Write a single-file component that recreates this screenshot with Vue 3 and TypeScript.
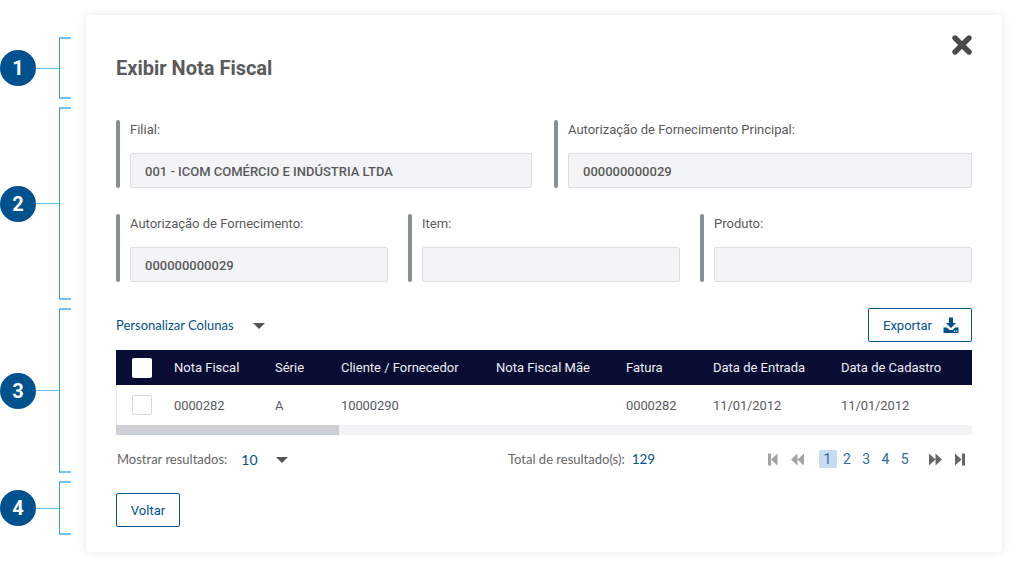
<script setup lang="ts">
type Field = { label: string; value: string }
type Marker = { id: number; size: string }

const markers: Marker[] = [
  { id: 1, size: 'm1' },
  { id: 2, size: 'm2' },
  { id: 3, size: 'm3' },
  { id: 4, size: 'm4' },
]

const topFields: Field[] = [
  { label: 'Filial:', value: '001 - ICOM COMÉRCIO E INDÚSTRIA LTDA' },
  { label: 'Autorização de Fornecimento Principal:', value: '000000000029' },
]

const bottomFields: Field[] = [
  { label: 'Autorização de Fornecimento:', value: '000000000029' },
  { label: 'Item:', value: '' },
  { label: 'Produto:', value: '' },
]

const columns = ['Nota Fiscal', 'Série', 'Cliente / Fornecedor', 'Nota Fiscal Mãe', 'Fatura', 'Data de Entrada', 'Data de Cadastro']
const row = ['0000282', 'A', '10000290', '', '0000282', '11/01/2012', '11/01/2012']
const pages = [1, 2, 3, 4, 5]
</script>

<template>
  <div class="page">
    <aside class="rail">
      <div v-for="m in markers" :key="m.id" class="marker" :class="m.size">
        <span class="marker__num">{{ m.id }}</span>
        <span class="marker__line"></span>
        <span class="marker__bracket"></span>
      </div>
    </aside>

    <main class="card">
      <button class="close" type="button" aria-label="Fechar">
        <svg width="22" height="22" viewBox="0 0 22 22">
          <path d="M4 4 L18 18 M18 4 L4 18" stroke="#4a4a4a" stroke-width="5.4" stroke-linecap="round" />
        </svg>
      </button>
      <h1 class="title">Exibir Nota Fiscal</h1>

      <div class="fields fields--two">
        <div v-for="f in topFields" :key="f.label" class="field">
          <span class="field__label">{{ f.label }}</span>
          <div class="field__input">{{ f.value }}</div>
        </div>
      </div>
      <div class="fields fields--three">
        <div v-for="f in bottomFields" :key="f.label" class="field">
          <span class="field__label">{{ f.label }}</span>
          <div class="field__input">{{ f.value }}</div>
        </div>
      </div>

      <div class="toolbar">
        <div class="custom">
          <span class="custom__text">Personalizar Colunas</span>
          <span class="caret"></span>
        </div>
        <button class="btn btn--export" type="button">
          Exportar
          <svg width="16" height="16" viewBox="0 0 16 16" fill="#00528f">
            <path d="M6 0.5 H10 V6 H13 L8 11 L3 6 H6 Z" />
            <path d="M0.5 10.5 H3.8 L6.6 13 H9.4 L12.2 10.5 H15.5 V16 H0.5 Z" />
            <rect x="11" y="13.6" width="1.2" height="1.2" fill="#fff" />
            <rect x="13" y="13.6" width="1.2" height="1.2" fill="#fff" />
          </svg>
        </button>
      </div>

      <div class="table">
        <div class="table__row table__row--head">
          <span class="check check--head"></span>
          <span v-for="c in columns" :key="c">{{ c }}</span>
        </div>
        <div class="table__row table__row--body">
          <span class="check"></span>
          <span v-for="(c, i) in row" :key="i">{{ c }}</span>
        </div>
        <div class="scroll"><div class="scroll__thumb"></div></div>
      </div>

      <div class="footer">
        <div class="footer__size">
          <span class="muted">Mostrar resultados:</span>
          <span class="link size">10</span>
          <span class="caret"></span>
        </div>
        <div class="footer__total">
          <span class="muted">Total de resultado(s):</span>
          <span class="link total">129</span>
        </div>
        <nav class="pager">
          <svg class="pager__first" width="10" height="13" viewBox="0 0 10 13" fill="#a3a3a3">
            <path d="M0 0.5 H3 V12.5 H0 Z M9.5 0.5 V12.5 L3 6.5 Z" />
          </svg>
          <svg class="pager__prev" width="13" height="13" viewBox="0 0 13 13" fill="#a3a3a3">
            <path d="M6.5 0.5 V12.5 L0 6.5 Z M13 0.5 V12.5 L6.5 6.5 Z" />
          </svg>
          <span v-for="p in pages" :key="p" class="pager__num" :class="{ 'pager__num--on': p === 1 }">{{ p }}</span>
          <svg class="pager__next" width="13" height="13" viewBox="0 0 13 13" fill="#666">
            <path d="M0 0.5 L6.5 6.5 L0 12.5 Z M6.5 0.5 L13 6.5 L6.5 12.5 Z" />
          </svg>
          <svg class="pager__last" width="10" height="13" viewBox="0 0 10 13" fill="#666">
            <path d="M0 0.5 L6.5 6.5 L0 12.5 Z M7 0.5 H10 V12.5 H7 Z" />
          </svg>
        </nav>
      </div>

      <button class="btn btn--back" type="button">Voltar</button>
    </main>
  </div>
</template>

<style>
html, body {
  margin: 0;
  background: #fff;
}
</style>

<style scoped>
.page {
  width: 1017px;
  height: 567px;
  display: flex;
  overflow: hidden;
  font-family: Roboto, sans-serif;
  box-sizing: border-box;
}

/* numbered brackets on the left */
.rail {
  width: 86px;
  flex: none;
  padding-top: 38px;
  display: flex;
  flex-direction: column;
  gap: 10px;
  box-sizing: border-box;
}
.marker {
  position: relative;
  display: flex;
  align-items: center;
}
.m1 { height: 60px; }
.m2 { height: 191px; }
.m3 { height: 163px; }
.m4 { height: 52px; }
.marker__num {
  width: 36px;
  height: 36px;
  border-radius: 50%;
  background: #00528f;
  color: #fff;
  font-size: 20px;
  font-weight: 700;
  display: flex;
  align-items: center;
  justify-content: center;
  flex: none;
}
.marker__line {
  width: 24px;
  height: 1px;
  background: #6cbcf8;
  flex: none;
}
.marker__bracket {
  position: absolute;
  left: 59px;
  top: -1px;
  bottom: -1px;
  width: 12px;
  border: 2px solid #74c0fc;
  border-left: 1px solid #349bf2;
  border-right: 0;
  box-sizing: border-box;
}

.card {
  position: relative;
  width: 916px;
  height: 537px;
  margin-top: 15px;
  padding: 0 30px;
  background: #fff;
  border-radius: 3px;
  box-shadow: 0 0 10px rgba(0, 0, 0, 0.1);
  box-sizing: border-box;
}
.close {
  position: absolute;
  top: 19px;
  right: 29px;
  padding: 0;
  border: 0;
  background: none;
  line-height: 0;
}
.title {
  margin: 0;
  padding-top: 41px;
  height: 105px;
  box-sizing: border-box;
  font-size: 20px;
  line-height: 24px;
  font-weight: 700;
  color: #5a5a5a;
}

.fields {
  display: grid;
}
.fields--two {
  grid-template-columns: 416px 418px;
  column-gap: 22px;
}
.fields--three {
  margin-top: 26px;
  grid-template-columns: repeat(3, 272px);
  column-gap: 20px;
}
.field {
  height: 68px;
  padding-left: 14px;
  padding-top: 1px;
  position: relative;
  display: flex;
  flex-direction: column;
  justify-content: space-between;
  box-sizing: border-box;
}
.field::before {
  content: '';
  position: absolute;
  left: 0;
  top: 0;
  bottom: 0;
  width: 4px;
  border-radius: 2px;
  background: #868e96;
}
.field__label {
  font-size: 13px;
  line-height: 18px;
  color: #5a5a5a;
}
.field__input {
  height: 35px;
  padding: 0 14px;
  background: #f3f4f6;
  border: 1px solid #dcdfe3;
  border-radius: 2px;
  font-size: 13px;
  font-weight: 500;
  line-height: 35px;
  color: #5a5a5a;
  box-sizing: border-box;
}

.toolbar {
  margin-top: 26px;
  height: 34px;
  display: flex;
  align-items: center;
  justify-content: space-between;
}
.custom {
  display: flex;
  align-items: center;
  gap: 19px;
}
.custom__text {
  font-family: Lato, sans-serif;
  font-size: 13px;
  color: #00528f;
}
.caret {
  width: 0;
  height: 0;
  margin-top: 1px;
  border-left: 6px solid transparent;
  border-right: 6px solid transparent;
  border-top: 6px solid #555;
}
.btn {
  height: 34px;
  padding: 0;
  background: #fff;
  border: 1px solid #00528f;
  border-radius: 2px;
  font-family: Roboto, sans-serif;
  font-size: 13px;
  color: #00528f;
  box-sizing: border-box;
}
.btn--export {
  width: 104px;
  padding-left: 14px;
  display: flex;
  align-items: center;
  gap: 11px;
}
.btn--back {
  width: 64px;
  margin-top: 24px;
  display: block;
}

.table {
  margin-top: 8px;
}
.table__row {
  display: grid;
  grid-template-columns: 42px 101px 66px 155px 130px 87px 128px 1fr;
  align-items: center;
  padding-left: 16px;
  font-size: 13px;
  white-space: nowrap;
}
.table__row--head {
  height: 35px;
  background: #0a0d33;
  color: #eceef2;
}
.table__row--body {
  height: 40px;
  color: #5a5a5f;
  border-left: 1px solid #e4e6ea;
  padding-left: 15px;
  letter-spacing: -0.1px;
}
.check {
  width: 20px;
  height: 20px;
  border-radius: 2px;
  background: #fff;
  border: 1px solid #d5d8dd;
  box-sizing: border-box;
}
.check--head {
  border: 0;
}
.scroll {
  height: 10px;
  background: #f3f4f6;
}
.scroll__thumb {
  width: 223px;
  height: 100%;
  background: #ccd0d6;
}

.footer {
  margin-top: 14px;
  height: 20px;
  display: flex;
  align-items: center;
  font-family: Lato, sans-serif;
  font-size: 13px;
}
.footer__size {
  width: 392px;
  padding-left: 1px;
  display: flex;
  align-items: center;
  box-sizing: border-box;
}
.footer__total {
  display: flex;
  align-items: center;
}
.muted {
  color: #666;
}
.link {
  color: #00528f;
}
.size {
  margin-left: 14px;
  margin-right: 18px;
  font-size: 14px;
}
.total {
  margin-left: 7px;
  font-size: 13.5px;
}
.pager {
  margin-left: auto;
  display: flex;
  align-items: center;
  font-family: Roboto, sans-serif;
}
.pager__first { margin-right: 13px; }
.pager__prev { margin-right: 15px; }
.pager__next { margin: 0 13px 0 14px; }
.pager__last { margin-right: 7px; }
.pager__num {
  width: 18px;
  height: 18px;
  margin-right: 1.3px;
  border-radius: 1px;
  line-height: 18px;
  font-size: 14px;
  text-align: center;
  color: #2f6ca3;
}
.pager__num--on {
  background: #c6dcf0;
}
</style>
